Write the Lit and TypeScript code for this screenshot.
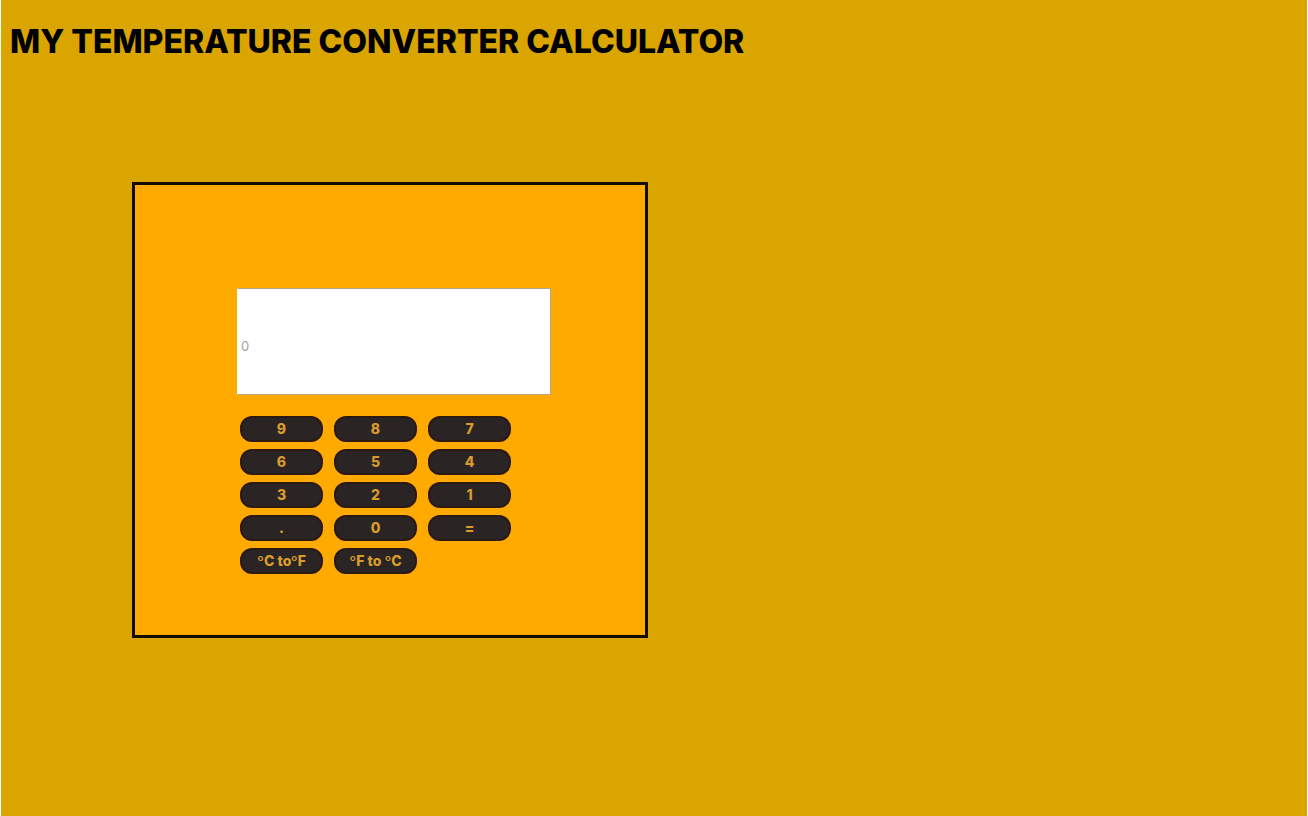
import { LitElement, html, css } from "lit";
import { customElement, state } from "lit/decorators.js";

const KEYS = ["9", "8", "7", "6", "5", "4", "3", "2", "1", ".", "0", "=", "ºC toºF", "ºF to ºC"];

@customElement("app-root")
export class AppRoot extends LitElement {
  static styles = css`
    :host {
      display: block;
      box-sizing: border-box;
      min-height: 100vh;
      padding: 22px 7px 22px 9px;
      border: solid #fff;
      border-width: 0 1px;
      background: #dba500;
      color: #000;
      font-family: Inter, "Liberation Sans", sans-serif;
    }
    .title {
      margin: 0;
      font-size: 32px;
      line-height: 40px;
      font-weight: 800;
    }
    .calculator {
      box-sizing: border-box;
      width: 40%;
      min-width: 480px;
      margin: 120px 0 0 122px;
      padding: 103px 94px 61px 102px;
      border: 3px solid #140c00;
      background: #ffaa00;
    }
    .display {
      display: block;
      box-sizing: border-box;
      width: 100%;
      height: 107px;
      margin: 0 0 21px;
      padding: 8px 3px 0;
      border: 1px solid #b5a68a;
      border-left-color: #fff;
      border-radius: 0;
      background: #fff;
      color: #333;
      font-family: inherit;
      font-size: 13px;
      outline: none;
    }
    .display::placeholder {
      color: #a0a0a0;
      opacity: 1;
    }
    .keys {
      display: grid;
      grid-template-columns: repeat(3, 83px);
      gap: 7px 11px;
      padding-left: 3px;
    }
    .key {
      height: 26px;
      padding: 0;
      border: 2px solid #2c1a12;
      border-radius: 12px;
      background: #2a2425;
      color: #d99c2b;
      font-family: inherit;
      font-size: 14px;
      line-height: 16px;
      font-weight: 800;
      white-space: nowrap;
      cursor: pointer;
    }
  `;

  @state() private value = "";

  private press(key: string) {
    const n = Number(this.value);
    if (key === "=") this.value = String(n);
    else if (key === KEYS[12]) this.value = String((n * 9) / 5 + 32);
    else if (key === KEYS[13]) this.value = String(((n - 32) * 5) / 9);
    else this.value += key;
  }

  render() {
    return html`
      <h1 class="title">MY TEMPERATURE CONVERTER CALCULATOR</h1>
      <main class="calculator">
        <input
          class="display"
          type="text"
          aria-label="Temperature"
          placeholder="0"
          .value=${this.value}
          @input=${(e: Event) => (this.value = (e.target as HTMLInputElement).value)}
        />
        <div class="keys">
          ${KEYS.map(
            (key) => html`<button class="key" type="button" @click=${() => this.press(key)}>${key}</button>`
          )}
        </div>
      </main>
    `;
  }
}
